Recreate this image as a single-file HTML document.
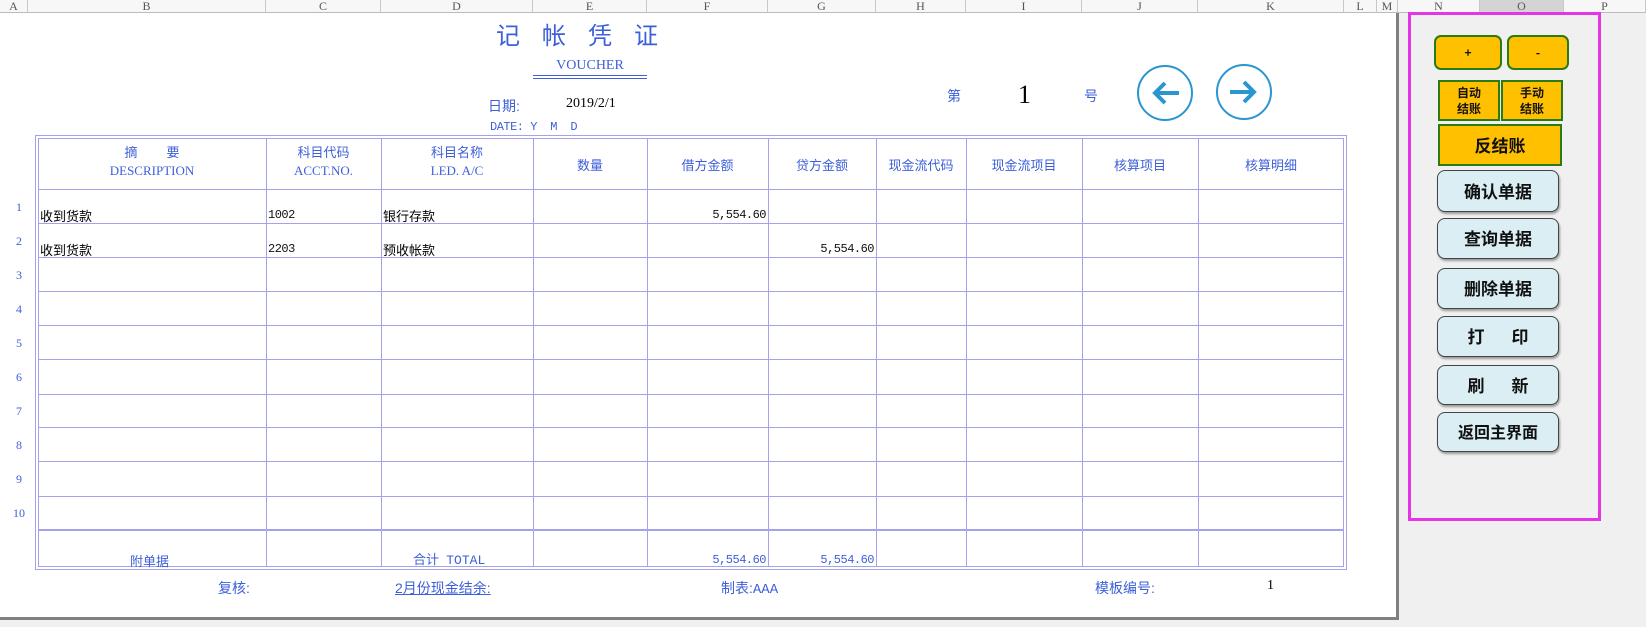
<!DOCTYPE html>
<html><head><meta charset="utf-8"><style>
*{margin:0;padding:0;box-sizing:border-box}
body{width:1646px;height:627px;position:relative;overflow:hidden;background:#f0f0f0;font-family:"Liberation Sans","Noto Sans CJK SC",sans-serif}
.a{position:absolute;white-space:nowrap}
.ch{position:absolute;top:0;height:13px;font:12px "Liberation Serif",serif;color:#555;text-align:center;line-height:12px;border-right:1px solid #c8c8c8;background:#f7f7f7;border-bottom:1px solid #bbb}
.b{color:#3d5fd9}
.hl{position:absolute;background:#a3a3ec}
.btn{position:absolute;left:1437px;width:122px;background:#daeef3;border:1.5px solid #444;border-radius:8px;box-shadow:1px 2px 2px #999;font:bold 17px "Noto Sans CJK SC",sans-serif;color:#111;text-align:center}
.or{position:absolute;background:#ffc000;border:2px solid #2c7a12;font:bold 12px "Noto Sans CJK SC",sans-serif;text-align:center;color:#111}
.m{font-family:"Liberation Mono",monospace;font-size:12px;color:#111;letter-spacing:-0.5px}
.rn{position:absolute;left:12px;width:14px;text-align:center;font:12px "Liberation Serif",serif;color:#3d5fd9}
</style></head><body>
<div class="a" style="left:0;top:0;width:1398px;height:618px;background:#fff"></div>
<div class="a" style="left:1396px;top:13px;width:3px;height:607px;background:#808080"></div>
<div class="a" style="left:0;top:617px;width:1399px;height:3px;background:#808080"></div>

<div class="ch" style="left:0;width:28px">A</div>
<div class="ch" style="left:28px;width:238px">B</div>
<div class="ch" style="left:266px;width:115px">C</div>
<div class="ch" style="left:381px;width:152px">D</div>
<div class="ch" style="left:533px;width:114px">E</div>
<div class="ch" style="left:647px;width:121px">F</div>
<div class="ch" style="left:768px;width:108px">G</div>
<div class="ch" style="left:876px;width:90px">H</div>
<div class="ch" style="left:966px;width:116px">I</div>
<div class="ch" style="left:1082px;width:116px">J</div>
<div class="ch" style="left:1198px;width:146px">K</div>
<div class="ch" style="left:1344px;width:33px">L</div>
<div class="ch" style="left:1377px;width:21px">M</div>
<div class="ch" style="left:1398px;width:82px">N</div>
<div class="ch" style="left:1480px;width:84px;background:#d4d4d4">O</div>
<div class="ch" style="left:1564px;width:82px">P</div>

<div class="a b" style="left:496px;top:16px;font:24px 'Noto Sans CJK SC',sans-serif;letter-spacing:22px">记帐凭证</div>
<div class="a b" style="left:533px;top:58px;width:114px;text-align:center;font:14px 'Liberation Serif',serif">VOUCHER</div>
<div class="a" style="left:533px;top:75px;width:114px;height:4px;border-top:1px solid #3d5fd9;border-bottom:1px solid #3d5fd9"></div>
<div class="a b" style="left:488px;top:96px;font-size:14px">日期:</div>
<div class="a" style="left:566px;top:96px;font:14px 'Liberation Serif',serif">2019/2/1</div>
<div class="a b m" style="left:490px;top:120px;color:#3d5fd9">DATE: Y &nbsp;M &nbsp;D</div>
<div class="a b" style="left:947px;top:86px;font-size:14px">第</div>
<div class="a" style="left:1018px;top:80px;font:26px 'Liberation Serif',serif">1</div>
<div class="a b" style="left:1084px;top:86px;font-size:14px">号</div>
<svg class="a" style="left:1136px;top:64px" width="140" height="58"><circle cx="29" cy="29" r="27" fill="#fff" stroke="#2b95d0" stroke-width="2"/><path d="M43 29H19M29 19L19 29L29 39" fill="none" stroke="#2b95d0" stroke-width="4"/><circle cx="108" cy="28" r="27" fill="#fff" stroke="#2b95d0" stroke-width="2"/><path d="M94 28H118M108 18L118 28L108 38" fill="none" stroke="#2b95d0" stroke-width="4"/></svg>

<div class="a" style="left:35px;top:135px;width:1312px;height:435px;border:1px solid #a3a3ec"></div>
<div class="a" style="left:38px;top:138px;width:1306px;height:429px;border:1px solid #a3a3ec"></div>
<div class="hl" style="left:266px;top:138px;width:1px;height:429px"></div>
<div class="hl" style="left:381px;top:138px;width:1px;height:429px"></div>
<div class="hl" style="left:533px;top:138px;width:1px;height:429px"></div>
<div class="hl" style="left:647px;top:138px;width:1px;height:429px"></div>
<div class="hl" style="left:768px;top:138px;width:1px;height:429px"></div>
<div class="hl" style="left:876px;top:138px;width:1px;height:429px"></div>
<div class="hl" style="left:966px;top:138px;width:1px;height:429px"></div>
<div class="hl" style="left:1082px;top:138px;width:1px;height:429px"></div>
<div class="hl" style="left:1198px;top:138px;width:1px;height:429px"></div>
<div class="hl" style="left:38px;top:189px;width:1306px;height:1px"></div>
<div class="hl" style="left:38px;top:223px;width:1306px;height:1px"></div>
<div class="hl" style="left:38px;top:257px;width:1306px;height:1px"></div>
<div class="hl" style="left:38px;top:291px;width:1306px;height:1px"></div>
<div class="hl" style="left:38px;top:325px;width:1306px;height:1px"></div>
<div class="hl" style="left:38px;top:359px;width:1306px;height:1px"></div>
<div class="hl" style="left:38px;top:394px;width:1306px;height:1px"></div>
<div class="hl" style="left:38px;top:427px;width:1306px;height:1px"></div>
<div class="hl" style="left:38px;top:461px;width:1306px;height:1px"></div>
<div class="hl" style="left:38px;top:496px;width:1306px;height:1px"></div>
<div class="hl" style="left:38px;top:529px;width:1306px;height:2px"></div>

<div class="a b" style="left:38px;top:144px;width:228px;text-align:center;font-size:13px;line-height:18px">摘&nbsp;&nbsp;&nbsp;&nbsp;&nbsp;&nbsp;&nbsp;&nbsp;要<br><span style="font-family:'Liberation Serif',serif">DESCRIPTION</span></div>
<div class="a b" style="left:266px;top:144px;width:115px;text-align:center;font-size:13px;line-height:18px">科目代码<br><span style="font-family:'Liberation Serif',serif">ACCT.NO.</span></div>
<div class="a b" style="left:381px;top:144px;width:152px;text-align:center;font-size:13px;line-height:18px">科目名称<br><span style="font-family:'Liberation Serif',serif">LED. A/C</span></div>
<div class="a b" style="left:533px;top:155px;width:114px;text-align:center;font-size:13px">数量</div>
<div class="a b" style="left:647px;top:155px;width:121px;text-align:center;font-size:13px">借方金额</div>
<div class="a b" style="left:768px;top:155px;width:108px;text-align:center;font-size:13px">贷方金额</div>
<div class="a b" style="left:876px;top:155px;width:90px;text-align:center;font-size:13px">现金流代码</div>
<div class="a b" style="left:966px;top:155px;width:116px;text-align:center;font-size:13px">现金流项目</div>
<div class="a b" style="left:1082px;top:155px;width:116px;text-align:center;font-size:13px">核算项目</div>
<div class="a b" style="left:1198px;top:155px;width:146px;text-align:center;font-size:13px">核算明细</div>

<div class="rn" style="top:200px">1</div><div class="rn" style="top:234px">2</div><div class="rn" style="top:268px">3</div><div class="rn" style="top:302px">4</div><div class="rn" style="top:336px">5</div><div class="rn" style="top:370px">6</div><div class="rn" style="top:404px">7</div><div class="rn" style="top:438px">8</div><div class="rn" style="top:472px">9</div><div class="rn" style="top:506px">10</div>

<div class="a" style="left:40px;top:206px;font-size:13px">收到货款</div>
<div class="a m" style="left:268px;top:208px">1002</div>
<div class="a" style="left:383px;top:206px;font-size:13px">银行存款</div>
<div class="a m" style="left:647px;top:208px;width:119px;text-align:right">5,554.60</div>
<div class="a" style="left:40px;top:240px;font-size:13px">收到货款</div>
<div class="a m" style="left:268px;top:242px">2203</div>
<div class="a" style="left:383px;top:240px;font-size:13px">预收帐款</div>
<div class="a m" style="left:768px;top:242px;width:106px;text-align:right">5,554.60</div>

<div class="a b" style="left:130px;top:551px;font-size:13px">附单据</div>
<div class="a b" style="left:413px;top:549px;font-size:13px">合计 &nbsp;<span style="font-family:'Liberation Mono',monospace">TOTAL</span></div>
<div class="a m" style="left:647px;top:553px;width:119px;text-align:right;color:#3d5fd9">5,554.60</div>
<div class="a m" style="left:768px;top:553px;width:106px;text-align:right;color:#3d5fd9">5,554.60</div>

<div class="a b" style="left:218px;top:578px;font-size:14px">复核:</div>
<div class="a b" style="left:395px;top:578px;font-size:14px;text-decoration:underline">2月份现金结余:</div>
<div class="a b" style="left:721px;top:578px;font-size:14px">制表:<span style="font-family:'Liberation Mono',monospace">AAA</span></div>
<div class="a b" style="left:1095px;top:578px;font-size:14px">模板编号:</div>
<div class="a" style="left:1267px;top:578px;font:14px 'Liberation Serif',serif">1</div>

<div class="a" style="left:1408px;top:12px;width:193px;height:509px;border:3px solid #e535e5"></div>
<div class="or" style="left:1434px;top:35px;width:68px;height:35px;border-radius:7px;line-height:31px">+</div>
<div class="or" style="left:1507px;top:35px;width:62px;height:35px;border-radius:7px;line-height:31px">-</div>
<div class="or" style="left:1438px;top:80px;width:62px;height:41px;line-height:16px;padding-top:3px">自动<br>结账</div>
<div class="or" style="left:1501px;top:80px;width:62px;height:41px;line-height:16px;padding-top:3px">手动<br>结账</div>
<div class="or" style="left:1438px;top:124px;width:124px;height:42px;font-size:17px;line-height:38px">反结账</div>
<div class="btn" style="top:170px;height:42px;line-height:39px">确认单据</div>
<div class="btn" style="top:218px;height:41px;line-height:38px">查询单据</div>
<div class="btn" style="top:268px;height:41px;line-height:38px">删除单据</div>
<div class="btn" style="top:316px;height:41px;line-height:38px">打&nbsp;&nbsp;&nbsp;&nbsp;&nbsp;&nbsp;&nbsp;印</div>
<div class="btn" style="top:365px;height:40px;line-height:37px">刷&nbsp;&nbsp;&nbsp;&nbsp;&nbsp;&nbsp;&nbsp;新</div>
<div class="btn" style="top:412px;height:40px;line-height:37px;font-size:16px">返回主界面</div>
</body></html>
